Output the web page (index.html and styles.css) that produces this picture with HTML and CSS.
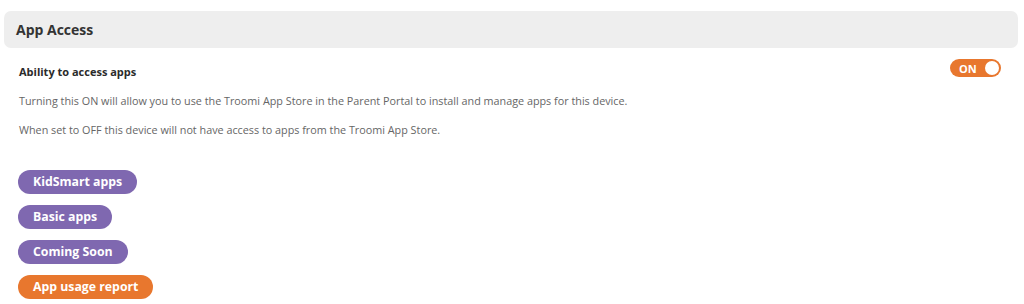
FILE: index.html
```html
<!DOCTYPE html>
<html lang="en">
  <head>
    <meta charset="UTF-8" />
    <meta name="viewport" content="width=device-width, initial-scale=1.0" />
    <title>App Access</title>
    <link rel="stylesheet" href="styles.css">
  </head>
  <body>
    <div class="panel">
      <div class="panel-header">App Access</div>

      <div class="setting">
        <div class="setting-row">
          <span class="setting-title">Ability to access apps</span>
          <button class="toggle" id="accessToggle">ON<span class="knob"></span></button>
        </div>
        <p>Turning this ON will allow you to use the Troomi App Store in the Parent Portal to install and manage apps for this device.</p>
        <p>When set to OFF this device will not have access to apps from the Troomi App Store.</p>
      </div>

      <div class="links">
        <a class="pill">KidSmart apps</a>
        <a class="pill">Basic apps</a>
        <a class="pill">Coming Soon</a>
        <a class="pill orange">App usage report</a>
      </div>
    </div>
  </body>
</html>
```

FILE: styles.css
```css
body {
  font-family: "Open Sans", sans-serif;
  margin: 0;
  color: #333;
}
.panel {
  padding: 11px 6px 0 4px;
}
.panel-header {
  background-color: #eeeeee;
  border-radius: 7px;
  height: 37px;
  line-height: 37px;
  padding-left: 12px;
  font-size: 14px;
  font-weight: 700;
  color: #333;
}
.setting {
  padding: 11px 17px 0 15px;
}
.setting-row {
  display: flex;
  justify-content: space-between;
  align-items: flex-start;
}
.setting-title {
  margin-top: 3px;
  line-height: 20px;
  font-size: 11px;
  font-weight: 700;
  color: #2b2b2b;
}
.toggle {
  display: flex;
  align-items: center;
  width: 51px;
  height: 18px;
  padding: 0 2px 0 9px;
  border: none;
  border-radius: 9px;
  background-color: #e8772e;
  color: #fff;
  font-family: inherit;
  font-size: 11px;
  font-weight: 700;
  justify-content: space-between;
}
.knob {
  width: 14px;
  height: 14px;
  border-radius: 50%;
  background-color: #fff;
}
.setting p {
  font-size: 10.8px;
  color: #666;
  margin: 0;
  line-height: 29px;
}
.setting p:first-of-type {
  margin-top: 4px;
}
.links {
  display: flex;
  flex-direction: column;
  align-items: flex-start;
  gap: 11px;
  padding: 26px 0 0 14px;
}
.pill {
  height: 24px;
  line-height: 24px;
  padding: 0 15px;
  border-radius: 12px;
  background-color: #7f68b0;
  color: #fff;
  font-size: 12.3px;
  font-weight: 700;
}
.pill.orange {
  background-color: #e8772e;
}
```
